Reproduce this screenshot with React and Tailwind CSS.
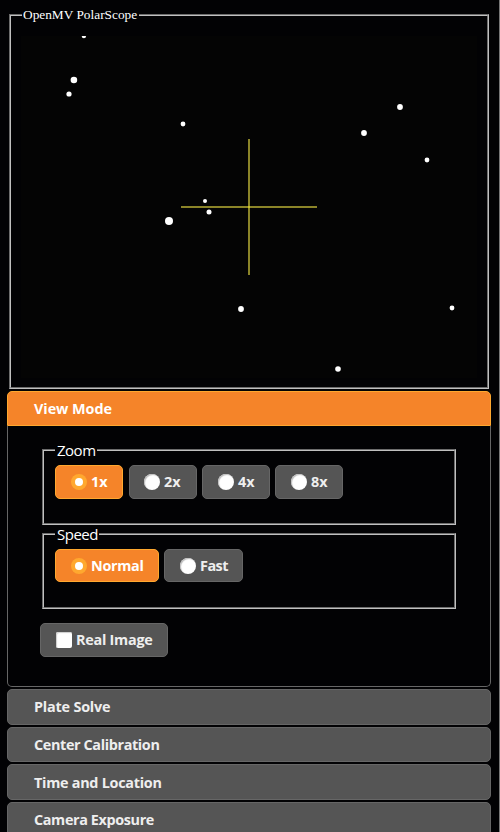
const stars = [
  [83.9, 36, 2.2],
  [73.9, 80, 3.3],
  [69, 94, 2.6],
  [183, 124, 2.4],
  [205, 201, 2],
  [209, 212, 2.5],
  [169, 221, 4],
  [400, 107, 2.9],
  [364, 133, 2.9],
  [427, 160, 2.4],
  [241, 309, 2.9],
  [452, 308, 2.4],
  [338, 369, 2.8],
];

function StarField() {
  return (
    <svg className="block h-[342px] w-[456px] bg-[#040404]" viewBox="21 36 456 342">
      {stars.map(([x, y, r]) => (
        <circle key={`${x}-${y}`} cx={x} cy={y} r={r} fill="#fff" />
      ))}
      <rect x="181" y="206" width="136" height="2" fill="#8b8428" />
      <rect x="248" y="139" width="2" height="136" fill="#8b8428" />
      <rect x="248" y="206" width="2" height="2" fill="#c9c12c" />
    </svg>
  );
}

function Mark({ checked, square }) {
  if (square) return <span className="size-4 rounded-[2px] bg-white shadow-[inset_1px_1px_1px_#ccc]" />;
  if (checked)
    return (
      <span className="flex size-4 items-center justify-center rounded-full bg-[#ffa82f]">
        <span className="size-2 rounded-full bg-white" />
      </span>
    );
  return <span className="size-4 rounded-full bg-white shadow-[inset_1px_1px_1px_#bbb]" />;
}

function Option({ label, checked, square, size, text }) {
  return (
    <label
      className={`flex items-center gap-1 rounded-[5px] border font-bold whitespace-nowrap ${size} ${
        checked ? "border-[#ffa82f] bg-[#f58429] text-white" : "border-[#666] bg-[#555] text-[#eee]"
      }`}
    >
      <Mark checked={checked} square={square} />
      <span className={text}>{label}</span>
    </label>
  );
}

function Group({ title, legendWidth, className = "", children }) {
  return (
    <fieldset className={`h-[85px] w-[414px] border-2 border-[#c0c0c0] [border-style:groove] ${className}`}>
      <legend
        className={`ml-[11px] h-[20px] pl-0.5 text-[15px] leading-[20px] tracking-[-0.5px] text-white ${legendWidth}`}
      >
        {title}
      </legend>
      <div className="flex pt-[5px] pl-[11px]">{children}</div>
    </fieldset>
  );
}

const sections = [
  { title: "Plate Solve", size: "h-[36px] mt-[2px]", text: "tracking-[-0.2px]" },
  { title: "Center Calibration", size: "h-[35px] mt-[2px]", text: "tracking-[-0.37px]" },
  { title: "Time and Location", size: "h-[36px] mt-[2px] pt-px", text: "tracking-[-0.27px]" },
  { title: "Camera Exposure", size: "h-[36px] mt-[2px]", text: "tracking-[-0.37px]" },
];

export default function App() {
  return (
    <div className="h-[832px] w-[500px] overflow-hidden border-r border-[#777] bg-[#020204] pt-[7px] pl-[7px] font-['Open_Sans','Noto_Sans',sans-serif] text-[14.4px]">
      <fieldset className="ml-[2px] h-[382px] w-[480px] border-2 border-[#c0c0c0] pl-[10px] [border-style:groove]">
        <legend className="ml-px h-[16px] w-[117px] pl-px font-['Liberation_Serif',serif] text-[13.33px] leading-[16px] whitespace-nowrap text-white">
          OpenMV PolarScope
        </legend>
        <div className="pt-[13px]">
          <StarField />
        </div>
      </fieldset>

      <section className="mt-[2px] w-[484px]">
        <h3 className="flex h-[35px] items-center rounded-t-[5px] border border-[#ffa82f] bg-[#f58429] pl-[26px] font-bold text-white">
          <span className="tracking-[-0.05px]">View Mode</span>
        </h3>
        <div className="h-[261px] rounded-b-[5px] border border-t-0 border-[#666] pt-[14px] pl-[34px]">
          <Group title="Zoom" legendWidth="w-[42px]">
            <Option label="1x" checked size="h-[34px] w-[68px] pl-[15px]" />
            <Option label="2x" size="ml-[6px] h-[34px] w-[68px] pl-[14px]" />
            <Option label="4x" size="ml-[5px] h-[34px] w-[68px] pl-[15px]" />
            <Option label="8x" size="ml-[5px] h-[34px] w-[68px] pl-[15px]" />
          </Group>
          <Group title="Speed" legendWidth="w-[44px]" className="-mt-px">
            <Option label="Normal" checked size="h-[33px] w-[104px] pl-[15px]" text="tracking-[-0.3px]" />
            <Option label="Fast" size="ml-[5px] h-[33px] w-[79px] pl-[15px]" text="tracking-[-0.5px]" />
          </Group>
          <div className="-ml-[2px] pt-[14px]">
            <Option label="Real Image" square size="h-[34px] w-[128px] pl-[15px]" text="tracking-[-0.25px]" />
          </div>
        </div>
      </section>

      {sections.map(({ title, size, text }) => (
        <h3
          key={title}
          className={`flex w-[484px] items-center rounded-[5px] border border-[#666] bg-[#555] pl-[26px] font-bold text-[#eee] ${size}`}
        >
          <span className={text}>{title}</span>
        </h3>
      ))}
    </div>
  );
}
